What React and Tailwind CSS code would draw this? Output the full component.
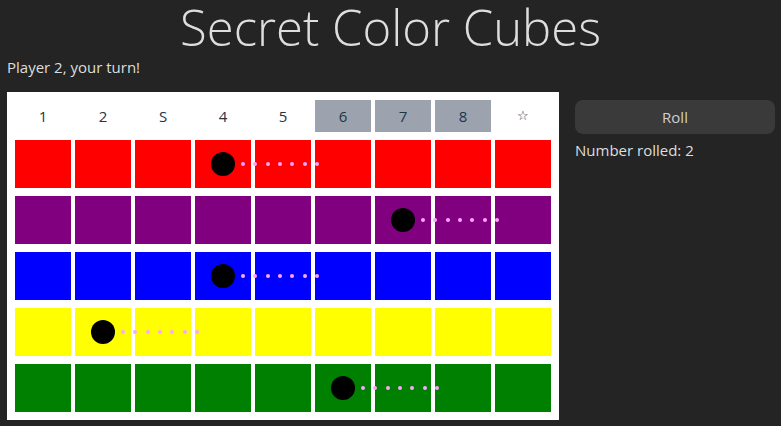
import React from 'react';

const COLORS = ['bg-[#ff0000]', 'bg-[#800080]', 'bg-[#0000ff]', 'bg-[#ffff00]', 'bg-[#008000]'];
const HEADERS = ['1', '2', 'S', '4', '5', '6', '7', '8', '☆'];
const LOCKED = [5, 6, 7];
// column index of each player's cube, per row
const CUBES = [3, 6, 3, 1, 5];

const Trail = () => (
  <div className="absolute left-[46px] top-[22px] z-10 flex gap-[8.33px]">
    {Array.from({ length: 7 }).map((_, i) => (
      <span key={i} className="h-1 w-1 rounded-full bg-[#ffa4ff]" />
    ))}
  </div>
);

const Cell = ({ color, hasCube }) => (
  <div className={`relative h-12 ${color}`}>
    {hasCube && (
      <>
        <span className="absolute left-4 top-3 h-6 w-6 rounded-full bg-black" />
        <Trail />
      </>
    )}
  </div>
);

const App = () => {
  return (
    <div
      className="min-h-screen overflow-hidden bg-[#242424] text-[#dedede]"
      style={{ fontFamily: '"Open Sans", "Noto Sans", sans-serif' }}
    >
      <h1 className="-mt-[2px] text-center text-[49px] font-light leading-[58px]">
        Secret Color Cubes
      </h1>
      <p className="h-[36px] px-[7px] text-[15px] leading-[22px]">Player 2, your turn!</p>

      <div className="flex items-start">
        <div className="ml-[7px] bg-white p-2">
          <div className="grid grid-cols-[repeat(9,56px)] gap-x-1 gap-y-2">
            {HEADERS.map((h, i) => (
              <div
                key={h}
                className={`flex h-8 items-center justify-center text-[#213547] ${
                  i === 8 ? 'text-[13px]' : 'text-[15px]'
                } ${LOCKED.includes(i) ? 'bg-[#9ca3af]' : ''}`}
              >
                {h}
              </div>
            ))}
            {COLORS.map((color, r) =>
              HEADERS.map((_, c) => (
                <Cell key={`${r}-${c}`} color={color} hasCube={CUBES[r] === c} />
              ))
            )}
          </div>
        </div>

        <div className="ml-4 mt-2 w-[200px]">
          <button className="h-[34px] w-full rounded-lg bg-[#3a3a3a] text-[15px] text-[#cfcfcf]">
            Roll
          </button>
          <div className="mt-[5px] text-[15px] leading-[22px]">Number rolled: 2</div>
        </div>
      </div>
    </div>
  );
};

export default App;
